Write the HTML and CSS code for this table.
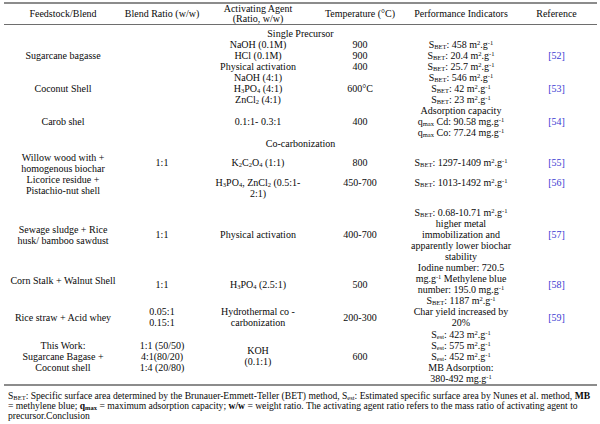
FILE: index.html
```html
<!DOCTYPE html>
<html lang="en">
<head>
<meta charset="utf-8">
<title>Comparison table</title>
<link rel="stylesheet" href="styles.css">
</head>
<body>
<div class="page">
  <div class="tbl">
    <div class="row head">
      <div class="cell"><span>Feedstock/Blend</span></div>
      <div class="cell"><span>Blend Ratio (w/w)</span></div>
      <div class="cell"><span>Activating Agent<br>(Ratio, w/w)</span></div>
      <div class="cell"><span>Temperature (°C)</span></div>
      <div class="cell"><span>Performance Indicators</span></div>
      <div class="cell"><span>Reference</span></div>
    </div>

    <div class="section sp">Single Precursor</div>

    <div class="row r33">
      <div class="cell"><span>Sugarcane bagasse</span></div>
      <div class="cell"></div>
      <div class="cell"><span>NaOH (0.1M)<br>HCl (0.1M)<br>Physical activation</span></div>
      <div class="cell"><span>900<br>900<br>400</span></div>
      <div class="cell"><span>S<sub>BET</sub>: 458 m<sup>2</sup>.g<sup>-1</sup><br>S<sub>BET</sub>: 20.4 m<sup>2</sup>.g<sup>-1</sup><br>S<sub>BET</sub>: 25.7 m<sup>2</sup>.g<sup>-1</sup></span></div>
      <div class="cell ref"><span>[52]</span></div>
    </div>

    <div class="row r33">
      <div class="cell"><span>Coconut Shell</span></div>
      <div class="cell"></div>
      <div class="cell"><span>NaOH (4:1)<br>H<sub>3</sub>PO<sub>4</sub> (4:1)<br>ZnCl<sub>2</sub> (4:1)</span></div>
      <div class="cell"><span>600°C</span></div>
      <div class="cell"><span>S<sub>BET</sub>: 546 m<sup>2</sup>.g<sup>-1</sup><br>S<sub>BET</sub>: 42 m<sup>2</sup>.g<sup>-1</sup><br>S<sub>BET</sub>: 23 m<sup>2</sup>.g<sup>-1</sup></span></div>
      <div class="cell ref"><span>[53]</span></div>
    </div>

    <div class="row r33">
      <div class="cell"><span>Carob shel</span></div>
      <div class="cell"></div>
      <div class="cell"><span>0.1:1- 0.3:1</span></div>
      <div class="cell"><span>400</span></div>
      <div class="cell"><span>Adsorption capacity<br>q<sub>max</sub> Cd: 90.58 mg.g<sup>-1</sup><br>q<sub>max</sub> Co: 77.24 mg.g<sup>-1</sup></span></div>
      <div class="cell ref"><span>[54]</span></div>
    </div>

    <div class="section cc">Co-carbonization</div>

    <div class="row willow">
      <div class="cell"><span>Willow wood with +<br>homogenous biochar</span></div>
      <div class="cell"><span>1:1</span></div>
      <div class="cell"><span>K<sub>2</sub>C<sub>2</sub>O<sub>4</sub> (1:1)</span></div>
      <div class="cell"><span>800</span></div>
      <div class="cell"><span>S<sub>BET</sub>: 1297-1409 m<sup>2</sup>.g<sup>-1</sup></span></div>
      <div class="cell ref"><span>[55]</span></div>
    </div>

    <div class="row licorice">
      <div class="cell lift"><span>Licorice residue +<br>Pistachio-nut shell</span></div>
      <div class="cell"></div>
      <div class="cell"><span>H<sub>3</sub>PO<sub>4</sub>, ZnCl<sub>2</sub> (0.5:1-<br>2:1)</span></div>
      <div class="cell"><span>450-700</span></div>
      <div class="cell"><span>S<sub>BET</sub>: 1013-1492 m<sup>2</sup>.g<sup>-1</sup></span></div>
      <div class="cell ref"><span>[56]</span></div>
    </div>

    <div class="row sewage">
      <div class="cell"><span>Sewage sludge + Rice<br>husk/ bamboo sawdust</span></div>
      <div class="cell"><span>1:1</span></div>
      <div class="cell"><span>Physical activation</span></div>
      <div class="cell"><span>400-700</span></div>
      <div class="cell"><span>S<sub>BET</sub>: 0.68-10.71 m<sup>2</sup>.g<sup>-1</sup><br>higher metal<br>immobilization and<br>apparently lower biochar<br>stability</span></div>
      <div class="cell ref"><span>[57]</span></div>
    </div>

    <div class="row corn">
      <div class="cell up"><span>Corn Stalk + Walnut Shell</span></div>
      <div class="cell"><span>1:1</span></div>
      <div class="cell"><span>H<sub>3</sub>PO<sub>4</sub> (2.5:1)</span></div>
      <div class="cell"><span>500</span></div>
      <div class="cell"><span>Iodine number: 720.5<br>mg.g<sup>-1</sup> Methylene blue<br>number: 195.0 mg.g<sup>-1</sup><br>S<sub>BET</sub>: 1187 m<sup>2</sup>.g<sup>-1</sup></span></div>
      <div class="cell ref"><span>[58]</span></div>
    </div>

    <div class="row rice">
      <div class="cell"><span>Rice straw + Acid whey</span></div>
      <div class="cell"><span>0.05:1<br>0.15:1</span></div>
      <div class="cell"><span>Hydrothermal co -<br>carbonization</span></div>
      <div class="cell"><span>200-300</span></div>
      <div class="cell"><span>Char yield increased by<br>20%</span></div>
      <div class="cell ref"><span>[59]</span></div>
    </div>

    <div class="row work">
      <div class="cell"><span>This Work:<br>Sugarcane Bagase +<br>Coconut shell</span></div>
      <div class="cell"><span>1:1 (50/50)<br>4:1(80/20)<br>1:4 (20/80)</span></div>
      <div class="cell"><span>KOH<br>(0.1:1)</span></div>
      <div class="cell"><span>600</span></div>
      <div class="cell"><span>S<sub>est</sub>: 423 m<sup>2</sup>.g<sup>-1</sup><br>S<sub>est</sub>: 575 m<sup>2</sup>.g<sup>-1</sup><br>S<sub>est</sub>: 452 m<sup>2</sup>.g<sup>-1</sup><br>MB Adsorption:<br>380-492 mg.g<sup>-1</sup></span></div>
      <div class="cell ref"></div>
    </div>
  </div>

  <p class="note">S<sub>BET</sub>: Specific surface area determined by the Brunauer-Emmett-Teller (BET) method, S<sub>est</sub>: Estimated specific surface area by Nunes et al. method, <b>MB</b><br>= methylene blue; <b>q<sub>max</sub></b> = maximum adsorption capacity; <b>w/w</b> = weight ratio. The activating agent ratio refers to the mass ratio of activating agent to<br>precursor.Conclusion</p>
</div>
</body>
</html>
```

FILE: styles.css
```css
html, body {
  margin: 0;
  padding: 0;
  background: #ffffff;
}

.page {
  width: 600px;
  height: 424px;
  overflow: hidden;
  font-family: "Liberation Serif", "Times New Roman", serif;
  font-size: 10px;
  line-height: 11px;
  color: #0a0a0a;
}

.tbl {
  margin: 2px 3px 0 4px;
  width: 593px;
  border-top: 2px solid #8c8c8c;
  border-bottom: 2px solid #8c8c8c;
}

.row {
  display: grid;
  grid-template-columns: 118px 80px 112px 92px 110px 81px;
}

.cell {
  display: flex;
  align-items: center;
  justify-content: center;
  text-align: center;
  white-space: nowrap;
}

.head {
  height: 20px;
  line-height: 10px;
  border-bottom: 1px solid #6e6e6e;
}

.section {
  text-align: center;
}

.sp {
  height: 14px;
  padding-top: 3px;
  box-sizing: border-box;
}

.cc {
  height: 11px;
}

.r33 { height: 33px; }
.willow { height: 27px; }
.licorice { height: 31px; }
.licorice .cell { align-items: flex-start; padding-top: 1px; }
.licorice .lift { padding-top: 0; margin-top: -2px; }
.sewage { height: 55px; }
.corn { height: 44px; }
.corn .up { padding-bottom: 8px; }
.rice { height: 22px; }
.work { height: 56px; }

.ref {
  color: #3a3ad2;
}

sup, sub {
  font-size: 6.5px;
  line-height: 0;
}

sub {
  vertical-align: -1px;
}

sup {
  vertical-align: 3px;
}

.note {
  margin: 5px 0 0 8px;
  font-size: 9.6px;
  line-height: 10px;
  white-space: nowrap;
}

.note b {
  font-weight: bold;
}
```
